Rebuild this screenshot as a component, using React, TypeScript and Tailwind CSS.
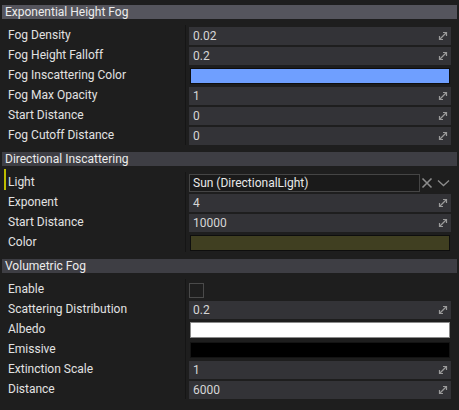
import React from "react";

const ExpandIcon = () => (
  <svg width="10" height="10" viewBox="0 0 10 10" fill="none" stroke="#9a9a9a" strokeWidth="1.2">
    <path d="M1.5 8.5 L8.5 1.5" />
    <path d="M5 1.5 H8.5 V5" />
    <path d="M1.5 5 V8.5 H5" />
  </svg>
);

type Row =
  | { label: string; kind: "num"; value: string }
  | { label: string; kind: "color"; color: string; border: string }
  | { label: string; kind: "check" }
  | { label: string; kind: "ref"; value: string; marked?: boolean };

const NumField = ({ value }: { value: string }) => (
  <div className="h-[18px] bg-[#333337] flex items-center justify-between pl-[4px] pr-[3px] text-[#d6d6d6]">
    <span>{value}</span>
    <ExpandIcon />
  </div>
);

const Value = ({ row }: { row: Row }) => {
  if (row.kind === "num") return <NumField value={row.value} />;
  if (row.kind === "color")
    return (
      <div className="h-[18px] flex items-center">
        <div className={`h-[16px] w-full ml-[1px] mr-[1px] border ${row.border} ${row.color}`} />
      </div>
    );
  if (row.kind === "check")
    return (
      <div className="h-[18px] flex items-center">
        <div className="w-[15px] h-[15px] border border-[#4a4a4a]" />
      </div>
    );
  return (
    <div className="h-[18px] flex items-center">
      <div className="h-[18px] w-[231px] bg-[#1a1a1a] border border-[#454545] flex items-center pl-[3px] text-[#e8e8e8]">
        {row.value}
      </div>
      <svg width="12" height="12" viewBox="0 0 12 12" className="ml-[1px]" stroke="#8c8c8c" strokeWidth="1.6" fill="none">
        <path d="M1.5 1.5 L10.5 10.5 M10.5 1.5 L1.5 10.5" />
      </svg>
      <svg width="13" height="8" viewBox="0 0 13 8" className="ml-[4px]" stroke="#8c8c8c" strokeWidth="1.3" fill="none">
        <path d="M1 1.5 L6.5 6.5 L12 1.5" />
      </svg>
    </div>
  );
};

const Section = ({ title, rows, active }: { title: string; rows: Row[]; active?: boolean }) => (
  <div className="mb-[5px]">
    <div
      className={`mx-[2px] h-[14px] leading-[14px] pl-[3px] text-[#ececec] ${active ? "bg-[#55555d]" : "bg-[#3e3e44]"}`}
    >
      {title}
    </div>
    <div className="mt-[2px] pt-[4px] pb-[2px] flex">
      <div className="w-[186px] border-r border-[#151515] shrink-0">
        {rows.map((r) => (
          <div key={r.label} className="relative h-[20px] flex items-center pl-[8px] pb-[1px] text-[#e2e2e2]">
            {r.kind === "ref" && r.marked && (
              <div className="absolute left-[4px] top-[-3px] bottom-[2px] w-[2px] bg-[#bdbd00]" />
            )}
            {r.label}
          </div>
        ))}
      </div>
      <div className="flex-1 pl-[3px] pr-[8px]">
        {rows.map((r) => (
          <div key={r.label} className="h-[20px] pt-[2px]">
            <Value row={r} />
          </div>
        ))}
      </div>
    </div>
  </div>
);

export default function App() {
  return (
    <div className="w-[459px] h-[410px] overflow-hidden bg-[#1e1e1e] pt-[5px] text-[12px] font-['Roboto',sans-serif]">
      <Section
        title="Exponential Height Fog"
        active
        rows={[
          { label: "Fog Density", kind: "num", value: "0.02" },
          { label: "Fog Height Falloff", kind: "num", value: "0.2" },
          { label: "Fog Inscattering Color", kind: "color", color: "bg-[#6f9fff]", border: "border-[#0e0e0e]" },
          { label: "Fog Max Opacity", kind: "num", value: "1" },
          { label: "Start Distance", kind: "num", value: "0" },
          { label: "Fog Cutoff Distance", kind: "num", value: "0" },
        ]}
      />
      <Section
        title="Directional Inscattering"
        rows={[
          { label: "Light", kind: "ref", value: "Sun (DirectionalLight)", marked: true },
          { label: "Exponent", kind: "num", value: "4" },
          { label: "Start Distance", kind: "num", value: "10000" },
          { label: "Color", kind: "color", color: "bg-[#403f21]", border: "border-[#0e0e0e]" },
        ]}
      />
      <Section
        title="Volumetric Fog"
        rows={[
          { label: "Enable", kind: "check" },
          { label: "Scattering Distribution", kind: "num", value: "0.2" },
          { label: "Albedo", kind: "color", color: "bg-[#ffffff]", border: "border-[#8a8a8a]" },
          { label: "Emissive", kind: "color", color: "bg-[#000000]", border: "border-[#141414]" },
          { label: "Extinction Scale", kind: "num", value: "1" },
          { label: "Distance", kind: "num", value: "6000" },
        ]}
      />
    </div>
  );
}
